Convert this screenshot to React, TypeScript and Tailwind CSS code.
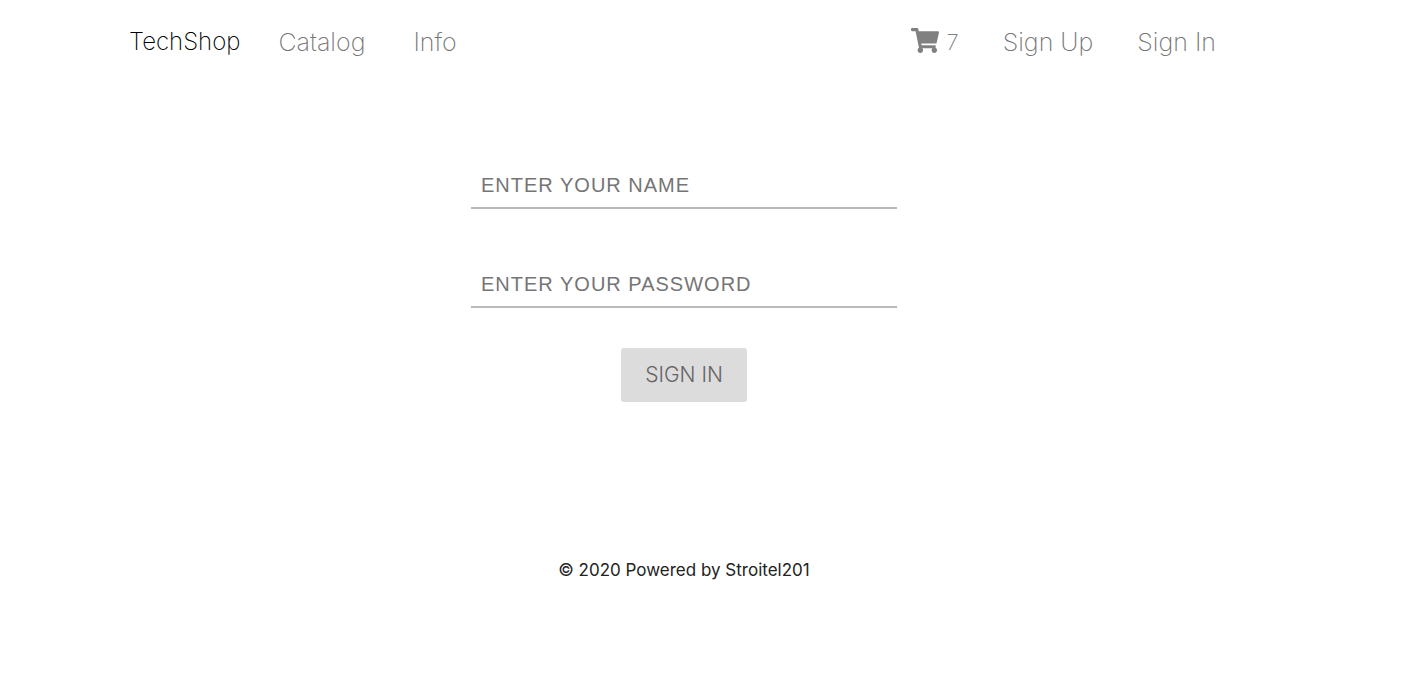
import { FaShoppingCart } from "react-icons/fa";

const linkClass = "text-[25px] leading-8 text-[#757575] no-underline";

export default function App() {
  return (
    <div className="min-h-screen bg-white font-['Inter',sans-serif] font-light">
      <header className="pt-[26px] pr-[207px] pl-[129px] font-extralight">
        <nav className="flex items-center justify-between">
          <div className="flex items-center">
            <a href="#home" className="mr-[38px] text-2xl leading-8 text-black">TechShop</a>
            <a href="#catalog" className={linkClass + " mr-12"}>Catalog</a>
            <a href="#info" className={linkClass}>Info</a>
          </div>
          <div className="flex items-center gap-11">
            <a href="#cart" aria-label="Cart, 7 items" className="flex items-start gap-2 text-[#808080]">
              <FaShoppingCart className="mt-[2px] h-[25px] w-7" />
              <span className="text-[22px] leading-8">7</span>
            </a>
            <a href="#signup" className={linkClass}>Sign Up</a>
            <a href="#signin" className={linkClass}>Sign In</a>
          </div>
        </nav>
      </header>
      <main className="pr-[55px]">
        <form className="mx-auto mt-[103px] flex w-[426px] flex-col items-center" onSubmit={(e) => e.preventDefault()}>
          <input
            type="text"
            aria-label="Name"
            placeholder="ENTER YOUR NAME"
            className="h-12 w-full border-b-2 border-[#b9b9b9] px-[10px] pt-[2px] font-['Liberation_Sans',sans-serif] text-xl font-normal tracking-[1px] text-[#333] outline-none placeholder:text-[#757575]"
          />
          <input
            type="password"
            aria-label="Password"
            placeholder="ENTER YOUR PASSWORD"
            className="mt-[51px] h-12 w-full border-b-2 border-[#b9b9b9] px-[10px] pt-[2px] font-['Liberation_Sans',sans-serif] text-xl font-normal tracking-[1px] text-[#333] outline-none placeholder:text-[#757575]"
          />
          <button type="submit" className="mt-10 h-[54px] w-[126px] rounded-[3px] bg-[#dcdcdc] text-[21px] text-[#666]">
            SIGN IN
          </button>
        </form>
      </main>
      <footer className="mt-[156px] pr-[55px] pb-10 text-center text-[17px] leading-6 font-normal text-[#222]">
        © 2020 Powered by Stroitel201
      </footer>
    </div>
  );
}
